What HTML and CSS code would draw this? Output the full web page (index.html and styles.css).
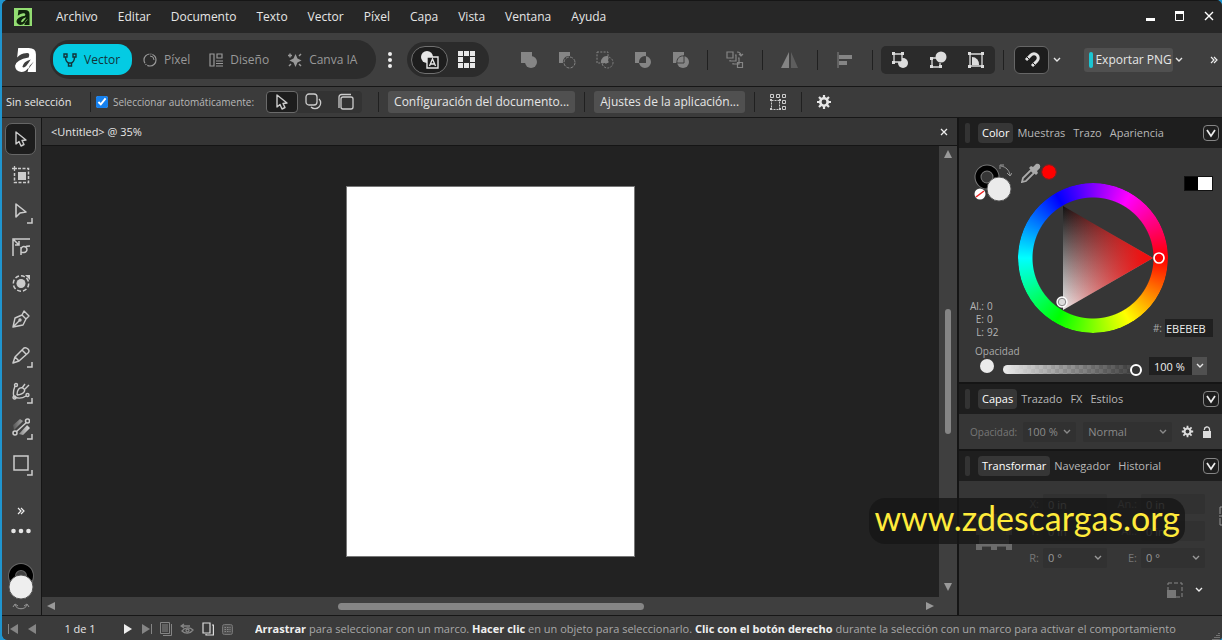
FILE: index.html
```
<!DOCTYPE html>
<html lang="es">
<head>
<meta charset="utf-8">
<title>Untitled @ 35%</title>
<link rel="stylesheet" href="styles.css">
</head>
<body>
<svg class="defs" aria-hidden="true">
  <symbol id="chev" viewBox="0 0 8 6"><path d="M1 1l3 3 3-3" fill="none" stroke="currentColor" stroke-width="1.4"/></symbol>
  <symbol id="cursor" viewBox="0 0 18 18"><path d="M4 2v12l3-2.500 2 4.500 3-1.500-2-4 4-.5z" fill="none" stroke="currentColor" stroke-width="1.4" stroke-linejoin="round"/></symbol>
  <symbol id="gear" viewBox="0 0 16 16"><circle cx="8" cy="8" r="3.700" fill="none" stroke="currentColor" stroke-width="2.600"/><path d="M8 1v3M8 12v3M1 8h3M12 8h3M3 3l2 2M11 11l2 2M3 13l2-2M11 5l2-2" stroke="currentColor" stroke-width="2.200"/></symbol>
  <symbol id="mark" viewBox="0 0 20 23"><path d="M3 0h10q7 0 7 6v17h-8l1-4q-3 4-7 4-6-1-6-6 1-6 13-8 2-5-3-4-4 0-8 4zM7 18q2 3 8-7-7 2-8 7zM13 20l5-7-4 4z" fill="currentColor" fill-rule="evenodd"/></symbol>
  <symbol id="corner" viewBox="0 0 6 6"><path d="M5 0v5H0" fill="none" stroke="currentColor" stroke-width="1.500"/></symbol>
</svg>
<div class="app">
  <header class="titlebar">
    <span class="app-badge"><svg width="14" height="15"><use href="#mark"/></svg></span>
    <nav class="menu">
      <button>Archivo</button><button>Editar</button><button>Documento</button><button>Texto</button><button>Vector</button><button>Píxel</button><button>Capa</button><button>Vista</button><button>Ventana</button><button>Ayuda</button>
    </nav>
    <div class="window-buttons">
      <button aria-label="Minimizar"><svg width="10" height="12"><path d="M0 7h9v3H0z" fill="#fff"/></svg></button>
      <button aria-label="Maximizar"><svg width="10" height="12"><path d="M.5.500h8v9h-8z" fill="none" stroke="#fff"/><path d="M0 0h9v3H0z" fill="#fff"/></svg></button>
      <button aria-label="Cerrar"><svg width="10" height="12"><path d="M1 1l8 8M9 1l-8 8" stroke="#fff" stroke-width="1.400"/></svg></button>
    </div>
  </header>

  <div class="toolbar">
    <svg class="brand" width="21" height="24"><use href="#mark"/></svg>
    <div class="personas">
      <button class="persona active"><svg width="14" height="14"><g fill="none" stroke="currentColor" stroke-width="1.400"><path d="M1 1h3v3H1zM10 1h3v3h-3zM5.500 10h3v3h-3z"/><path d="M2.500 4c0 4 1 5 3 6M11.500 4c0 4-1 5-3 6"/></g></svg>Vector</button>
      <button class="persona"><svg width="14" height="14"><circle cx="7" cy="7" r="6" fill="none" stroke="currentColor" stroke-width="1.200" stroke-dasharray="12 1 1 1"/><path d="M7 3a4 4 0 0 1 4 4" fill="none" stroke="currentColor"/></svg>Píxel</button>
      <button class="persona"><svg width="14" height="14"><path d="M1 1h4v12H1zM8 1h5v4H8zM7 8h7M7 10.500h7M7 13h7" fill="none" stroke="currentColor" stroke-width="1.200"/></svg>Diseño</button>
      <button class="persona"><svg width="14" height="14"><path d="M7.500 1l2 4.500 4 2-4 2-2 4.500-2-4.500-4-2 4-2z" fill="currentColor"/><path d="M11 3l2-2M1 13l2-2M11 11l2 2M0 2.500h4M2 .5v4" stroke="currentColor" stroke-width="1.500"/></svg>Canva IA</button>
    </div>
    <button class="bare more-v" aria-label="Más"><svg width="6" height="18" fill="#eee"><circle cx="3" cy="3" r="2"/><circle cx="3" cy="9" r="2"/><circle cx="3" cy="15" r="2"/></svg></button>
    <div class="view-pill">
      <button class="round active" aria-label="Vista"><svg width="20" height="20"><circle cx="7" cy="7" r="6" fill="#e6e6e6"/><path d="M7 7h11v11H7z" fill="#1d1d1d" stroke="#e6e6e6" stroke-width="1.400"/><path d="M9.500 16l3-7 3 7M10.500 14h4" fill="none" stroke="#e6e6e6" stroke-width="1.300"/></svg></button>
      <button class="round" aria-label="Cuadrícula"><svg width="18" height="18"><path d="M0 0h5v5H0zM6 0h5v5H6zM12 0h5v5h-5zM0 6h5v5H0zM12 6h5v5h-5zM0 12h5v5H0zM6 12h5v5H6zM12 12h5v5h-5z" fill="#e8e8e8"/></svg></button>
    </div>
    <div class="bool dim">
      <button class="bare" aria-label="Añadir"><svg width="18" height="18" fill="currentColor"><path d="M1 1h11v11H1z"/><circle cx="11" cy="11" r="6"/></svg></button>
      <button class="bare" aria-label="Sustraer"><svg width="18" height="18"><path d="M1 1h11v4a6 6 0 0 0-7 7H1z" fill="currentColor"/><circle cx="11.500" cy="11.500" r="5.500" fill="none" stroke="currentColor" stroke-dasharray="3 1.300"/></svg></button>
      <button class="bare" aria-label="Intersecar"><svg width="18" height="18"><path d="M12 5v7H5a6 6 0 0 1 7-7z" fill="currentColor"/><path d="M1 1h11v11H1z" fill="none" stroke="currentColor" stroke-dasharray="2 1.300"/><circle cx="11.500" cy="11.500" r="5.500" fill="none" stroke="currentColor" stroke-dasharray="2 1.300"/></svg></button>
      <button class="bare" aria-label="Combinar"><svg width="18" height="18"><path d="M1 1h11v11H1zM17 11A6 6 0 1 1 5 11 6 6 0 0 1 17 11z" fill="currentColor" fill-rule="evenodd"/></svg></button>
      <button class="bare" aria-label="Dividir"><svg width="18" height="18"><path d="M1 1h11v11H1z" fill="currentColor"/><circle cx="11" cy="11" r="6" fill="currentColor"/><path d="M12 4v8H4M5 12a6 6 0 0 1 7-7" fill="none" stroke="#3f3f3f"/></svg></button>
    </div>
    <i class="sep"></i>
    <button class="bare dim" aria-label="Orden"><svg width="18" height="18" fill="none" stroke="currentColor" stroke-width="1.200"><path d="M1 1h6v6H1zM4 9v1h6V4H9M7 12v1h6V7h-1M11.500 11.500h5v5h-5zM11 1c3 0 4 1 4 4M13 3l2 2 2-2"/></svg></button>
    <i class="sep"></i>
    <button class="bare dim" aria-label="Voltear"><svg width="18" height="18"><path d="M8 1v16H0z" fill="currentColor"/><path d="M10 1v16h7z" fill="currentColor" opacity=".45"/></svg></button>
    <i class="sep"></i>
    <button class="bare dim" aria-label="Alinear"><svg width="18" height="18"><path d="M2 1v16" stroke="currentColor"/><path d="M3 4h13v4H3zM3 10h8v4H3z" fill="currentColor"/></svg></button>
    <i class="sep"></i>
    <div class="insert">
      <button class="bare" aria-label="Insertar detrás"><svg width="18" height="18"><circle cx="12" cy="12" r="5" fill="#ddd"/><path d="M3 3h8v8H3z" fill="#2b2b2b" stroke="#ddd" stroke-width="1.300"/><path d="M1 1h3v3H1zM10 1h3v3h-3zM1 10h3v3H1zM10 10h3v3h-3z" fill="#ddd"/></svg></button>
      <button class="bare" aria-label="Insertar delante"><svg width="18" height="18"><path d="M3 7v9h8M3 7h4M11 12v4" fill="none" stroke="#ddd" stroke-width="1.300"/><circle cx="12" cy="6" r="5.500" fill="#ddd"/><path d="M1 6h3v3H1zM1 14h3v3H1zM10 14h3v3h-3z" fill="#ddd"/></svg></button>
      <button class="bare" aria-label="Insertar dentro"><svg width="18" height="18"><path d="M3 3h12v12H3z" fill="none" stroke="#ddd" stroke-width="1.300"/><path d="M5 6a7 7 0 0 1 7 8H5z" fill="#ddd"/><path d="M1 1h3v3H1zM14 1h3v3h-3zM1 14h3v3H1zM14 14h3v3h-3z" fill="#ddd"/></svg></button>
    </div>
    <i class="sep"></i>
    <button class="magnet" aria-label="Ajuste"><svg width="18" height="18"><path d="M3 9l5-5a3.800 3.800 0 0 1 6 6l-5 5" fill="none" stroke="#e2e2e2" stroke-width="3"/><path d="M4 6l3 3M9 11l3 3" stroke="#1d1d1d"/></svg></button>
    <button class="bare" aria-label="Opciones de ajuste"><svg width="8" height="6"><use href="#chev"/></svg></button>
    <button class="export"><i></i>Exportar PNG</button>
    <button class="bare" aria-label="Opciones de exportación"><svg width="8" height="6"><use href="#chev"/></svg></button>
    <button class="bare last" aria-label="Más herramientas"><svg width="8" height="8"><path d="M1 1l3 3-3 3M4 1l3 3-3 3" fill="none" stroke="#eee" stroke-width="1.200"/></svg></button>
  </div>

  <div class="context">
    <strong class="selection">Sin selección</strong>
    <i class="sep"></i>
    <label class="auto"><input type="checkbox" checked>Seleccionar automáticamente:</label>
    <div class="modes">
      <button class="active" aria-label="Automático"><svg width="18" height="18"><use href="#cursor"/></svg></button>
      <button aria-label="Objetos"><svg width="18" height="18" fill="none" stroke="currentColor" stroke-width="1.300"><rect x="1" y="1" width="11" height="11" rx="3"/><path d="M14 6a5.500 5.500 0 1 1-8 8"/></svg></button>
      <button aria-label="Grupos"><svg width="18" height="18" fill="none" stroke="currentColor" stroke-width="1.300"><rect x="4" y="4" width="12" height="12" rx="2"/><path d="M2 15V4a2.500 2.500 0 0 1 2.500-2.500H14"/></svg></button>
    </div>
    <i class="sep"></i>
    <button class="wide">Configuración del documento...</button>
    <i class="sep"></i>
    <button class="wide">Ajustes de la aplicación...</button>
    <i class="sep"></i>
    <button class="bare" aria-label="Ciclo de caja"><svg width="18" height="18" fill="none" stroke="#ccc"><path d="M1.500 1.500h3v3h-3zM7.500 1.500h3v3h-3zM13.500 1.500h3v3h-3zM13.500 7.500h3v3h-3zM13.500 13.500h3v3h-3z"/><path d="M2.500 7.500h8v9h-8z" stroke-dasharray="2 1"/><path d="M1 7h2M10 7h2M1 16h2M10 16h2" stroke-width="2"/></svg></button>
    <i class="sep"></i>
    <button class="bare" aria-label="Preferencias"><svg width="16" height="16"><use href="#gear"/></svg></button>
  </div>

  <main class="main">
    <aside class="tools">
      <button class="active" aria-label="Mover"><svg width="18" height="18"><use href="#cursor"/></svg></button>
      <button aria-label="Mesa de trabajo"><svg width="18" height="18"><path d="M6 6h8v8H6z" fill="currentColor"/><path d="M6 2.500h10.500v14h-14V7" fill="none" stroke="currentColor" stroke-width="1.500" stroke-dasharray="3 1.500"/><path d="M0 2.500h5M2.500 0v5" stroke="currentColor" stroke-width="1.300"/></svg></button>
      <button aria-label="Nodo"><svg width="18" height="18"><path d="M4 2v13l4-4 6-1z" fill="none" stroke="currentColor" stroke-width="1.600" stroke-linejoin="round"/></svg><svg class="corner"><use href="#corner"/></svg></button>
      <button aria-label="Esquina"><svg width="18" height="18" fill="none" stroke="currentColor" stroke-width="1.500"><path d="M1 18V1h17M2 2l5 5M7 3v4H3M9 17V9M9 12a3 3 0 1 1 3 2.500H9M13 9c1-1 3-1 5-1"/></svg></button>
      <button aria-label="Contorno"><svg width="18" height="18"><circle cx="9" cy="9.500" r="4.500" fill="currentColor"/><circle cx="9" cy="9.500" r="7.700" fill="none" stroke="currentColor" stroke-width="1.500" stroke-dasharray="4 2"/><path d="M13 1h5v5z" fill="currentColor"/></svg></button>
      <button aria-label="Pluma"><svg width="18" height="18" fill="none" stroke="currentColor" stroke-width="1.400" stroke-linejoin="round"><path d="M1 17L3 8l7-3 4 4-3 6zM2 16l6-6M10 5l2-4 5 5-3 3"/><circle cx="8" cy="10" r="1"/></svg></button>
      <button aria-label="Lápiz"><svg width="18" height="18" fill="none" stroke="currentColor" stroke-width="1.500" stroke-linejoin="round"><path d="M1 17l2-6L12 2q2-1 4 1t0 4l-9 8zM3 11l4 4M10 4l4 4"/></svg><svg class="corner"><use href="#corner"/></svg></button>
      <button aria-label="Pincel vectorial"><svg width="18" height="18" fill="none" stroke="currentColor" stroke-width="1.400"><path d="M3 4c-2 5-2 8-1 11 5 2 9 1 12-1M5 13c0-5 2-8 6-7 3 2 2 6-6 7M10 6l3-4M12 8l5-5"/><circle cx="4" cy="3" r="1.500"/><circle cx="2.500" cy="15.500" r="1.500"/><circle cx="15.500" cy="13" r="1.500"/></svg><svg class="corner"><use href="#corner"/></svg></button>
      <button aria-label="Degradado"><svg width="18" height="18"><defs><linearGradient id="gr"><stop stop-color="#555"/><stop offset="1" stop-color="#ddd"/></linearGradient></defs><path d="M1 7l7-6 3 2-9 9zM7 16l8-9 3 3-7 7z" fill="url(#gr)"/><path d="M4 14L15 4" stroke="#404040" stroke-width="4"/><g fill="#404040" stroke="currentColor" stroke-width="1.500"><path d="M4 14L15 4"/><circle cx="3" cy="15" r="2"/><circle cx="15.500" cy="3" r="2"/></g></svg><svg class="corner"><use href="#corner"/></svg></button>
      <button aria-label="Rectángulo"><svg width="18" height="18"><path d="M2 2h14v14H2z" fill="none" stroke="currentColor" stroke-width="1.500"/></svg><svg class="corner"><use href="#corner"/></svg></button>
      <button class="small expand" aria-label="Más herramientas"><svg width="8" height="8"><path d="M1 1l3 3-3 3M4 1l3 3-3 3" fill="none" stroke="#eee" stroke-width="1.200"/></svg></button>
      <button class="small" aria-label="Personalizar"><svg width="20" height="6" fill="#e5e5e5"><circle cx="2.500" cy="3" r="2.300"/><circle cx="10" cy="3" r="2.300"/><circle cx="17.500" cy="3" r="2.300"/></svg></button>
      <button class="fillstroke" aria-label="Relleno y trazo"><svg width="28" height="48"><circle cx="14" cy="14" r="9" fill="none" stroke="#666" stroke-width="8"/><circle cx="14" cy="14" r="9" fill="none" stroke="#000" stroke-width="6"/><circle cx="14" cy="25" r="12" fill="#eee" stroke="#555"/><path d="M8 43c2 5 10 5 12 0M6 45l2-3 3 2M22 45l-2-3-3 2" fill="none" stroke="#999"/></svg></button>
    </aside>

    <section class="document">
      <div class="tab"><span>&lt;Untitled&gt; @ 35%</span><button class="bare" aria-label="Cerrar documento"><svg width="8" height="8"><path d="M1 1l6 6M7 1L1 7" stroke="#eee" stroke-width="1.300"/></svg></button></div>
      <div class="view">
        <div class="canvas"><div class="page"></div></div>
        <div class="vscroll"><svg width="8" height="8"><path d="M4 0l4 8H0z" fill="#999"/></svg><div class="track"><i></i></div><svg width="8" height="8"><path d="M0 0h8L4 8z" fill="#999"/></svg></div>
        <div class="hscroll"><svg width="8" height="8"><path d="M8 0v8L0 4z" fill="#999"/></svg><div class="track"><i></i></div><svg width="8" height="8"><path d="M0 0v8l8-4z" fill="#999"/></svg></div>
      </div>
    </section>

    <aside class="panels">
      <section class="panel color">
        <div class="tabs"><i class="grip"></i><button class="active">Color</button><button>Muestras</button><button>Trazo</button><button>Apariencia</button><button class="fold" aria-label="Contraer"><svg width="10" height="9"><path d="M1 1l4 6 4-6" fill="none" stroke="#eee" stroke-width="1.700"/></svg></button></div>
        <div class="color-body">
          <div class="swatches">
            <svg width="38" height="40"><circle cx="13" cy="14" r="9" fill="none" stroke="#777" stroke-width="7"/><circle cx="13" cy="14" r="9" fill="none" stroke="#000" stroke-width="5"/><circle cx="25" cy="26" r="12" fill="#ebebeb" stroke="#555"/><circle cx="6" cy="31" r="5.500" fill="#fff"/><path d="M2 34l8-6" stroke="#e22" stroke-width="1.500"/><path d="M27 3c5 1 8 4 9 9M26 6V2h4M33 10l3 3 2-3" fill="none" stroke="#999"/></svg>
            <svg width="20" height="20"><path d="M1 19l1-4 8-8 3 3-8 8z" fill="none" stroke="#aaa" stroke-width="1.800"/><path d="M8 5l2-2 2 1 3-3c3-1 5 1 4 4l-3 3 1 2-2 2z" fill="#aaa"/></svg>
            <i class="picked"></i>
            <i class="bw"></i>
          </div>
          <div class="wheel">
            <svg viewBox="0 0 150 150">
              <defs>
                <linearGradient id="gray" x2="0" y2="1"><stop stop-color="#111"/><stop offset="1" stop-color="#eee"/></linearGradient>
                <linearGradient id="hue"><stop stop-color="#f01010" stop-opacity="0"/><stop offset=".9" stop-color="#f01010"/></linearGradient>
              </defs>
              <path d="M45 23l90 52-90 52z" fill="url(#gray)"/><path d="M45 23l90 52-90 52z" fill="url(#hue)"/>
              <circle cx="141" cy="75" r="5" fill="none" stroke="#fff" stroke-width="1.700"/>
              <circle cx="44" cy="119" r="5" fill="#ddd" stroke="#fff" stroke-width="1.300"/><circle cx="44" cy="119" r="3.700" fill="none" stroke="#888"/>
            </svg>
          </div>
          <dl class="hsl"><dt>Al.:</dt><dd>0</dd><dt>E:</dt><dd>0</dd><dt>L:</dt><dd>92</dd></dl>
          <label class="hex">#:<input type="text" value="EBEBEB"></label>
          <label class="op-label" for="opacity">Opacidad</label>
          <div class="opacity"><i class="dot"></i><input id="opacity" type="range" min="0" max="100" value="100"><input class="pct" type="text" value="100 %" aria-label="Porcentaje de opacidad"><button aria-label="Abrir"><svg width="8" height="6"><use href="#chev"/></svg></button></div>
        </div>
      </section>
      <section class="panel">
        <div class="tabs"><i class="grip"></i><button class="active">Capas</button><button>Trazado</button><button>FX</button><button>Estilos</button><button class="fold" aria-label="Contraer"><svg width="10" height="9"><path d="M1 1l4 6 4-6" fill="none" stroke="#eee" stroke-width="1.700"/></svg></button></div>
        <div class="layers-body">
          <label for="lop">Opacidad:</label>
          <span class="pick pick-s"><select id="lop"><option>100 %</option></select><svg width="8" height="6"><use href="#chev"/></svg></span>
          <span class="pick pick-l"><select aria-label="Modo de fusión"><option>Normal</option></select><svg width="8" height="6"><use href="#chev"/></svg></span>
          <button class="bare" aria-label="Opciones de capa"><svg width="13" height="13"><use href="#gear"/></svg></button>
          <button class="bare" aria-label="Bloquear"><svg width="8" height="12"><path d="M0 5h8v7H0z" fill="#ddd"/><path d="M1.500 4a2.500 2.500 0 0 1 5-1v3" fill="none" stroke="#ddd" stroke-width="1.300"/></svg></button>
        </div>
      </section>
      <section class="panel grow">
        <div class="tabs"><i class="grip"></i><button class="active">Transformar</button><button>Navegador</button><button>Historial</button><button class="fold" aria-label="Contraer"><svg width="10" height="9"><path d="M1 1l4 6 4-6" fill="none" stroke="#eee" stroke-width="1.700"/></svg></button></div>
        <div class="transform-body">
          <svg class="anchor" width="36" height="36"><path d="M3 3h30v30H3z" fill="#555"/><path d="M3 26h30v6H3z" fill="#6c6c6c"/><path d="M0 0h6v6H0zM15 0h6v6h-6zM30 0h6v6h-6zM0 15h6v6H0zM30 15h6v6h-6zM0 30h6v6H0zM15 30h6v6h-6zM30 30h6v6h-6z" fill="#6c6c6c"/></svg>
          <div class="fields">
            <label for="fx">X:</label><input id="fx" type="text" value="0 in"><label for="fw">An.:</label><input id="fw" type="text" value="0 in">
            <label for="fy">Y:</label><input id="fy" type="text" value="0 in"><label for="fh">Al.:</label><input id="fh" type="text" value="0 in">
            <label for="fr">R:</label><span class="pick"><select id="fr"><option>0 °</option></select><svg width="8" height="6"><use href="#chev"/></svg></span><label for="fs">E:</label><span class="pick"><select id="fs"><option>0 °</option></select><svg width="8" height="6"><use href="#chev"/></svg></span>
          </div>
          <svg class="link" width="6" height="22"><path d="M6 1H1v7M6 19H1v-7M0 10h3" fill="none" stroke="#999"/></svg>
          <div class="scale"><svg width="16" height="16"><path d="M1 1h14v14H1z" fill="none" stroke="#888" stroke-dasharray="4 2"/><path d="M0 8h9v8H0z" fill="#777"/></svg><button class="bare" aria-label="Opciones de transformación"><svg width="8" height="6"><use href="#chev"/></svg></button></div>
        </div>
      </section>
    </aside>
  </main>

  <footer class="status">
    <div class="pager">
      <button class="bare dim" aria-label="Primera"><svg width="10" height="10"><path d="M.5 0v10" stroke="currentColor"/><path d="M10 0v10L2 5z" fill="currentColor"/></svg></button>
      <button class="bare dim" aria-label="Anterior"><svg width="8" height="10"><path d="M8 0v10L0 5z" fill="currentColor"/></svg></button>
      <span>1 de 1</span>
      <button class="bare" aria-label="Siguiente"><svg width="8" height="10"><path d="M0 0v10l8-5z" fill="#eee"/></svg></button>
      <button class="bare dim" aria-label="Última"><svg width="10" height="10"><path d="M9.500 0v10" stroke="currentColor"/><path d="M0 0v10l8-5z" fill="currentColor"/></svg></button>
    </div>
    <div class="status-icons">
      <button class="bare dim" aria-label="Páginas"><svg width="12" height="14" fill="none" stroke="currentColor"><path d="M.5.500h9v11h-9zM2 3h6M2 5h6M2 7h6M2 9h6M11.500 2v11.500H3"/></svg></button>
      <button class="bare dim" aria-label="Vista previa"><svg width="14" height="12" fill="none" stroke="currentColor" stroke-width="1.300"><path d="M1 3h9M4 1L1 3l3 2M2 8c3-4 8-4 11-1-3 4-8 4-11 1z"/><circle cx="7.500" cy="7.500" r="1.500"/></svg></button>
      <button class="bare" aria-label="Duplicar"><svg width="12" height="14" fill="none" stroke="#ddd" stroke-width="1.200"><path d="M1 1h7v10H1zM10 3h1.400v10H4v-1"/></svg></button>
      <button class="bare dim" aria-label="Teclado"><svg width="11" height="11"><rect x=".5" y=".5" width="10" height="10" rx="2" fill="#505050" stroke="#777"/><path d="M2.500 3.500h6M2.500 5.500h6M2.500 7.500h6" stroke="#888" stroke-dasharray="1.500 1"/></svg></button>
    </div>
    <p><b>Arrastrar</b> para seleccionar con un marco. <b>Hacer clic</b> en un objeto para seleccionarlo. <b>Clic con el botón derecho</b> durante la selección con un marco para activar el comportamiento</p>
    <svg class="resize" width="8" height="8"><path d="M7 1v1M5 3v1M7 3v1M3 5v1M5 5v1M7 5v1M1 7v1M3 7v1M5 7v1M7 7v1" stroke="#aaa"/></svg>
  </footer>
  <div class="watermark">www.zdescargas.org</div>
</div>
</body>
</html>
```

FILE: styles.css
```
* { box-sizing: border-box; }
html, body { height: 100%; margin: 0; }
body { background: #1f95cf; color: #e6e6e6; font: 11px/16px "Open Sans", "Noto Sans", sans-serif; overflow: hidden; }
button, input, select { font: inherit; color: inherit; margin: 0; }
button { background: none; border: 0; padding: 0; white-space: nowrap; }
svg { display: block; flex: none; }
.defs { position: absolute; width: 0; height: 0; }
.dim { color: #858585; }
.bare { display: flex; }
.app { position: relative; height: 100vh; margin-left: 2px; display: flex; flex-direction: column; background: #3f3f3f; border-radius: 6px 6px 4px 6px; overflow: hidden; }

.titlebar { flex: none; height: 33px; display: flex; align-items: center; background: #272727; border-top: 1px solid #161616; padding: 0 8px 0 12px; }
.app-badge { width: 18px; height: 18px; display: grid; place-items: center; background: #93dd72; color: #10240c; }
.menu { display: flex; gap: 20px; margin-left: 24px; font-size: 12px; }
.window-buttons { margin-left: auto; display: flex; gap: 19px; align-items: center; }

.toolbar { flex: none; height: 53px; display: flex; align-items: center; background: #3f3f3f; padding: 0 4px 0 13px; }
.brand { color: #fff; }
.personas { height: 39px; display: flex; align-items: center; gap: 3px; margin-left: 14px; padding: 0 11px 0 3px; border-radius: 20px; background: #2c2c2c; color: #999; }
.persona { height: 31px; display: flex; align-items: center; gap: 7px; padding: 0 8px; border-radius: 14px; font-size: 12px; }
.persona.active { background: #04cbe3; color: #12343a; padding: 0 12px 0 10px; }
.more-v { margin: 0 14px 0 11px; }
.view-pill { display: flex; height: 35px; align-items: center; padding: 0 4px; border-radius: 18px; background: #2b2b2b; }
.round { width: 37px; height: 28px; display: grid; place-items: center; border-radius: 14px; border: 1px solid transparent; }
.round.active { background: #1d1d1d; border-color: #707070; }
.bool { display: flex; gap: 20px; margin: 0 17px 0 31px; }
.sep { flex: none; width: 1px; height: 20px; background: #202020; }
.toolbar .sep + .bare { margin: 0 18px; }
.insert { display: flex; gap: 20px; height: 28px; align-items: center; padding: 0 10px; margin: 0 8px; border-radius: 5px; background: #2b2b2b; }
.magnet { width: 35px; height: 28px; display: grid; place-items: center; margin: 0 4px 0 10px; border: 1px solid #666; border-radius: 6px; background: #1d1d1d; }
.toolbar .magnet + .bare { margin: 0 23px 0 0; }
.export { height: 24px; display: flex; align-items: center; gap: 2px; padding: 0 1px 0 5px; margin-right: 2px; border-radius: 3px; background: #505050; font-size: 12px; }
.export i { width: 4px; height: 16px; border-radius: 2px; background: #1bc5d2; }
.last { margin-left: auto; }

.context { flex: none; height: 32px; display: flex; align-items: center; background: #3b3b3b; border: solid #171717; border-width: 1px 0; padding-left: 4px; }
.context .bare { margin: 0 14px; }
.selection { font-weight: 400; width: 84px; }
.auto { display: flex; align-items: center; gap: 5px; margin: 0 12px 0 5px; color: #b8b8b8; font-size: 10px; white-space: nowrap; }
.auto input { width: 12px; height: 12px; accent-color: #1681ef; }
.modes { display: flex; height: 22px; border-radius: 4px; background: #333; margin-right: 16px; }
.modes button { width: 32px; display: grid; place-items: center; border: 1px solid transparent; border-radius: 4px; color: #ccc; }
.modes .active { background: #1d1d1d; border-color: #6a6a6a; }
.wide { height: 22px; margin: 0 9px; padding: 0 6px; border-radius: 3px; background: #505050; font-size: 12px; }

.main { flex: 1; min-height: 0; display: flex; background: #151515; gap: 1px; }
.tools { width: 39px; display: flex; flex-direction: column; align-items: center; background: #404040; padding: 5px 2px 0 0; color: #ccc; }
.tools button { position: relative; flex: none; width: 31px; height: 32px; margin-bottom: 4px; display: grid; place-items: center; border: 1px solid transparent; border-radius: 7px; }
.tools .active { background: #1d1d1d; border-color: #666; }
.tools .corner { position: absolute; right: 2px; bottom: 2px; width: 6px; height: 6px; }
.tools .small { height: 16px; }
.tools .expand { margin-top: 20px; }
.tools .fillstroke { height: 48px; margin: 18px 0 0; }

.document { flex: 1; min-width: 0; display: flex; flex-direction: column; gap: 1px; }
.tab { height: 27px; display: flex; align-items: center; justify-content: space-between; padding: 0 9px; background: #353535; }
.view { flex: 1; min-height: 0; display: grid; grid-template: minmax(0, 1fr) 18px / minmax(0, 1fr) 18px; background: #3f3f3f; }
.canvas { display: flex; align-items: center; justify-content: center; background: #222; }
.page { height: 82%; aspect-ratio: 287 / 371; background: #fff; outline: 1px solid #777; }
.vscroll { display: flex; flex-direction: column; align-items: center; padding: 4px 0 6px; }
.vscroll .track { flex: 1; width: 6px; display: flex; flex-direction: column; }
.vscroll .track::before { content: ""; flex: 151; }
.vscroll .track::after { content: ""; flex: 149; }
.vscroll i { flex: 125; border-radius: 3px; background: #858585; }
.hscroll { display: flex; align-items: center; padding: 0 5px; }
.hscroll .track { flex: 1; height: 7px; display: flex; }
.hscroll .track::before { content: ""; flex: 283; }
.hscroll .track::after { content: ""; flex: 282; }
.hscroll i { flex: 305; border-radius: 4px; background: #858585; }

.panels { width: 263px; margin-left: 1px; display: flex; flex-direction: column; gap: 2px; }
.panel { background: #363636; }
.grow { flex: 1; min-height: 0; }
.tabs { height: 30px; display: flex; align-items: center; background: #1e1e1e; padding: 0 3px 0 6px; color: #b8b8b8; }
.tabs .grip { width: 5px; height: 20px; margin-right: 8px; border-radius: 2px; background: #333; }
.tabs button { height: 20px; padding: 0 4px; border-radius: 4px; }
.tabs .active { background: #363636; color: #fff; }
.tabs .fold { margin-left: auto; width: 16px; height: 16px; padding: 0; display: grid; place-items: center; border: 1px solid #858585; }

.color-body { display: grid; grid-template: 35px 80px 70px 20px 22px / 49px 150px 1fr; padding: 0 9px 7px 10px; }
.swatches { grid-area: 1 / 1 / 3 / 4; display: flex; align-items: flex-start; gap: 9px; padding: 15px 0 0 5px; }
.picked { width: 14px; height: 14px; margin: 2px 0 0 -8px; border-radius: 50%; background: #f00; outline: 1px solid #722; }
.bw { width: 29px; height: 15px; margin: 13px 0 0 auto; border: 1px solid #111; background: linear-gradient(90deg, #000 50%, #fff 50%); }
.wheel { grid-area: 2 / 2 / 4 / 3; position: relative; }
.wheel::before { content: ""; position: absolute; inset: 0; border-radius: 50%; height: 150px; background: conic-gradient(from 90deg, red, yellow, lime, cyan, blue, magenta, red); mask: radial-gradient(circle closest-side, transparent 60px, #000 61px); }
.wheel svg { position: relative; width: 150px; height: 150px; }
.hsl { grid-area: 3 / 1; align-self: end; display: grid; grid-template-columns: 15px auto; gap: 0 3px; margin: 0 0 -6px; font-size: 10px; line-height: 13px; color: #b5b5b5; }
.hsl dt { text-align: right; white-space: nowrap; }
.hsl dd { margin: 0; }
.hex { grid-area: 3 / 2 / 4 / 4; justify-self: end; align-self: end; margin-bottom: -4px; display: flex; align-items: center; gap: 3px; font-size: 10px; color: #aaa; }
.hex input, .pct { background: #202020; border: 0; color: #eee; font-size: 11px; }
.hex input { width: 48px; height: 18px; padding: 0 1px; }
.op-label { grid-area: 4 / 1 / 5 / 3; align-self: end; padding-left: 6px; margin-bottom: -6px; font-size: 10px; color: #aaa; }
.opacity { grid-area: 5 / 1 / 6 / 4; display: flex; align-items: flex-end; margin: 0 6px 0 11px; }
.opacity .dot { width: 14px; height: 14px; margin: 0 9px 2px 0; border-radius: 50%; background: #ebebeb; }
.opacity input[type=range] { appearance: none; flex: 1; min-width: 0; height: 9px; margin: 0 7px 1px 0; border-radius: 5px; background: linear-gradient(90deg, #ebebeb, #aaab 40%, #333c 95%), repeating-conic-gradient(#888 0 25%, #555 0 50%) 0 0 / 8px 8px; }
.opacity input::-webkit-slider-thumb { appearance: none; width: 12px; height: 12px; border: 2px solid #fff; border-radius: 50%; background: #333; }
.pct { width: 43px; height: 18px; padding: 0 5px; }
.opacity button { width: 15px; height: 18px; display: grid; place-items: center; background: #505050; }

.layers-body { height: 35px; display: flex; align-items: center; gap: 7px; padding: 0 11px; color: #8a8a8a; }
.layers-body label { font-size: 10px; width: 46px; white-space: nowrap; color: #777; }
.layers-body .bare { color: #ddd; margin-left: 2px; }
.pick { position: relative; display: grid; align-items: center; }
.pick select { appearance: none; width: 100%; height: 20px; border: 0; border-radius: 2px; background: #313131; padding: 0 5px; }
.pick svg { position: absolute; right: 5px; }
.pick-s { width: 54px; }
.pick-l { width: 90px; }
.layers-body .pick-s select { padding: 0 4px; }

.transform-body { display: grid; grid-template: auto auto / 36px 1fr 6px; column-gap: 14px; padding: 13px 2px 0 17px; color: #999; }
.anchor { margin-top: 20px; }
.fields { display: grid; grid-template: 20px 20px 20px / 13px 64px 26px 64px; gap: 7px 4px; align-items: center; }
.fields label { color: #777; display: flex; justify-content: flex-end; white-space: nowrap; }
.fields input { width: 100%; height: 20px; border: 0; border-radius: 2px; background: #313131; padding: 0 5px; }
.link { margin-top: 12px; }
.scale { grid-column: 2 / 3; display: flex; justify-content: flex-end; align-items: center; gap: 12px; margin-top: 14px; padding-right: 2px; color: #eee; }

.status { flex: none; height: 25px; display: flex; align-items: center; background: #3b3b3b; border-top: 1px solid #171717; padding: 2px 2px 0 6px; }
.pager, .status-icons { display: flex; align-items: center; gap: 10px; }
.pager span { width: 68px; text-align: center; }
.status-icons { gap: 8px; margin: 0 22px 0 8px; }
.status p { flex: 1; min-width: 0; margin: 0; white-space: nowrap; overflow: hidden; color: #a8a8a8; }
.status b { color: #f0f0f0; }
.resize { align-self: flex-end; }

.watermark { position: absolute; right: 37px; bottom: 96px; height: 46px; padding: 0 5px; border-radius: 16px; background: #171717cc; color: #ffeb3b; font: 34px/40px Lato, "Open Sans", sans-serif; }
```
